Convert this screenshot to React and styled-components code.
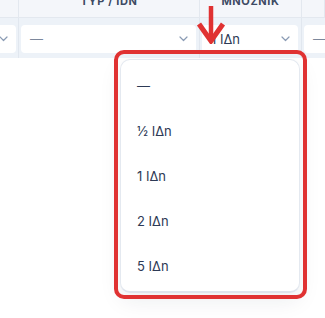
import React from "react";
import styled, { createGlobalStyle } from "styled-components";

const Global = createGlobalStyle`
  html, body { margin: 0; padding: 0; background: #ffffff; }
  body { font-family: "Inter", "Open Sans", sans-serif; overflow: hidden; }
  * { box-sizing: border-box; }
`;

const Page = styled.div`
  position: relative;
  width: 325px;
  height: 318px;
  overflow: hidden;
  background: #ffffff;
`;

const Table = styled.div`
  display: grid;
  grid-template-columns: 19px 181px 102px 1fr;
  margin-top: -16px;
`;

const HeadCell = styled.div`
  height: 34px;
  background: #f4f6fa;
  border-right: 1px solid #e3e8ef;
  border-bottom: 1px solid #e3e8ef;
  display: flex;
  align-items: center;
  justify-content: center;
  font-size: 11px;
  font-weight: 700;
  letter-spacing: 0.6px;
  color: #3d4a63;
  text-transform: uppercase;
  white-space: nowrap;
  &:last-child { border-right: none; }
`;

const BodyCell = styled.div`
  background: #edf2f8;
  border-right: 1px solid #e1e7ef;
  padding: 7px 3px 5px 2px;
  overflow: hidden;
  &:last-child { border-right: none; }
`;

const SelectBox = styled.div`
  height: 28px;
  background: #ffffff;
  border-radius: 4px;
  display: flex;
  align-items: center;
  justify-content: space-between;
  padding: 0 8px 0 9px;
  font-size: 13px;
  color: #2d3a55;
  margin-left: ${(p) => p.$shift || 0}px;
  width: ${(p) => (p.$w ? `${p.$w}px` : "auto")};
`;

const Placeholder = styled.span`
  color: #7c889c;
`;

const Chevron = () => (
  <svg width="9" height="6" viewBox="0 0 9 6" fill="none">
    <path d="M1 1l3.5 3.5L8 1" stroke="#8a9bb4" strokeWidth="1.2" strokeLinecap="round" strokeLinejoin="round" />
  </svg>
);

const Menu = styled.div`
  position: absolute;
  left: 120px;
  top: 59px;
  width: 180px;
  height: 234px;
  background: #ffffff;
  border: 1px solid #e4e9f0;
  border-bottom: 2px solid #dfe4ec;
  border-radius: 10px;
  box-shadow: 0 8px 22px rgba(30, 40, 60, 0.08);
  padding: 3px 0;
  display: flex;
  flex-direction: column;
`;

const Item = styled.div`
  height: 45px;
  display: flex;
  align-items: center;
  padding-left: 16px;
  font-size: 13px;
  color: #2d3a55;
`;

const Highlight = styled.div`
  position: absolute;
  left: 114px;
  top: 50px;
  width: 193px;
  height: 249px;
  border: 4px solid #e03232;
  border-radius: 10px;
  pointer-events: none;
`;

const Arrow = styled.svg`
  position: absolute;
  left: 196px;
  top: 4px;
`;

const items = ["—", "½ IΔn", "1 IΔn", "2 IΔn", "5 IΔn"];

export default function App() {
  return (
    <Page>
      <Global />
      <Table>
        <HeadCell />
        <HeadCell>Typ / IDN</HeadCell>
        <HeadCell>Množnik</HeadCell>
        <HeadCell />
        <BodyCell>
          <SelectBox $shift={-40} $w={54}>
            <Placeholder>—</Placeholder>
            <Chevron />
          </SelectBox>
        </BodyCell>
        <BodyCell>
          <SelectBox>
            <Placeholder>—</Placeholder>
            <Chevron />
          </SelectBox>
        </BodyCell>
        <BodyCell>
          <SelectBox>
            <span>1 IΔn</span>
            <Chevron />
          </SelectBox>
        </BodyCell>
        <BodyCell>
          <SelectBox $w={60}>
            <Placeholder>—</Placeholder>
          </SelectBox>
        </BodyCell>
      </Table>
      <Menu>
        {items.map((t) => (
          <Item key={t}>{t}</Item>
        ))}
      </Menu>
      <Highlight />
      <Arrow width="30" height="40" viewBox="0 0 30 40">
        <path d="M15 2 V34" stroke="#e03232" strokeWidth="4.5" />
        <path d="M3 20 L15 37 L27 20" stroke="#e03232" strokeWidth="5" fill="none" strokeLinejoin="miter" />
      </Arrow>
    </Page>
  );
}
